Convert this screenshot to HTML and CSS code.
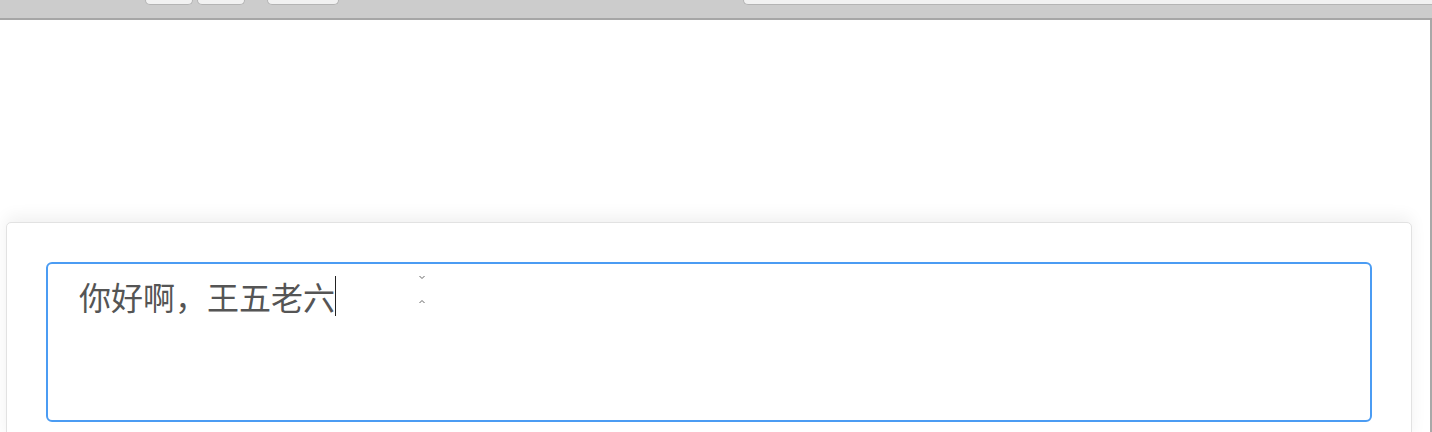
FILE: index.html
```html
<!DOCTYPE html>
<html lang="zh">
<head>
<meta charset="utf-8">
<link rel="stylesheet" href="styles.css">
</head>
<body>
<div class="toolbar">
  <div class="tb-btn tb-a"></div>
  <div class="tb-btn tb-b"></div>
  <div class="tb-btn tb-c"></div>
  <div class="tb-field"></div>
</div>
<div class="page">
  <div class="card">
    <div class="editor">
      <span class="text">你好啊，王五老六</span><span class="caret"></span>
      <svg class="spin" width="10" height="36" viewBox="0 0 10 36">
        <path d="M2.5 2 L5 4.5 L7.5 2" fill="none" stroke="#666" stroke-width="1"/>
        <path d="M2.5 29 L5 26.5 L7.5 29" fill="none" stroke="#666" stroke-width="1"/>
      </svg>
    </div>
  </div>
</div>
</body>
</html>
```
FILE: styles.css
```css
* { box-sizing: border-box; }
html, body { margin: 0; padding: 0; background: #fff; }
body { font-family: "Noto Sans CJK SC", "Noto Sans", sans-serif; width: 1432px; height: 432px; overflow: hidden; }

.toolbar {
  height: 20px;
  background: #cccccc;
  border-bottom: 2px solid #a6a6a6;
  display: flex;
  align-items: flex-start;
}
.tb-btn, .tb-field {
  height: 5px;
  background: #f1f1f1;
  border: 1px solid #b4b4b4;
  border-top: none;
  border-radius: 0 0 6px 6px;
}
.tb-a { margin-left: 145px; width: 48px; }
.tb-b { margin-left: 4px; width: 48px; }
.tb-c { margin-left: 22px; width: 72px; }
.tb-field { margin-left: 404px; flex: 1; border-right: none; border-radius: 0 0 0 6px; }

.page {
  height: 412px;
  border-right: 2px solid #a8a8a8;
  padding-top: 202px;
  padding-left: 6px;
}
.card {
  width: 1406px;
  height: 220px;
  background: #fff;
  border: 1px solid #e2e2e2;
  border-radius: 5px;
  box-shadow: 0 -6px 16px rgba(0, 0, 0, 0.06);
  padding: 39px 0 0 39px;
}
.editor {
  position: relative;
  width: 1326px;
  height: 160px;
  border: 2px solid #4b9cf3;
  border-radius: 6px;
  padding: 12px 0 0 31px;
  display: flex;
  align-items: flex-start;
}
.text {
  font-size: 32px;
  line-height: 40px;
  color: #555555;
  white-space: nowrap;
}
.caret {
  width: 1px;
  height: 40px;
  background: #222;
}
.spin {
  position: absolute;
  left: 369px;
  top: 10px;
}
```
